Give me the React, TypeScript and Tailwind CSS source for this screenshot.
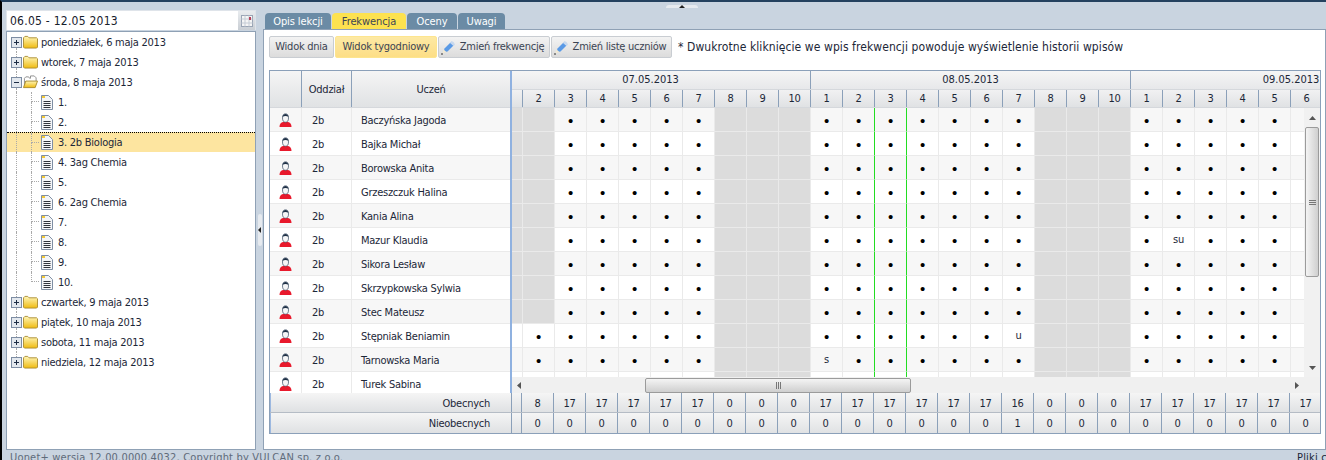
import type { ReactNode } from "react";

const students = [
  "Baczyńska Jagoda",
  "Bajka Michał",
  "Borowska Anita",
  "Grzeszczuk Halina",
  "Kania Alina",
  "Mazur Klaudia",
  "Sikora Lesław",
  "Skrzypkowska Sylwia",
  "Stec Mateusz",
  "Stępniak Beniamin",
  "Tarnowska Maria",
  "Turek Sabina",
];

const before = ["poniedziałek, 6 maja 2013", "wtorek, 7 maja 2013"];
const after = ["czwartek, 9 maja 2013", "piątek, 10 maja 2013", "sobota, 11 maja 2013", "niedziela, 12 maja 2013"];
const lessons = ["1.", "2.", "3. 2b Biologia", "4. 3ag Chemia", "5.", "6. 2ag Chemia", "7.", "8.", "9.", "10."];

// day index, lesson number
const columns: { day: number; n: number }[] = [];
for (let n = 1; n <= 10; n++) columns.push({ day: 0, n });
for (let n = 1; n <= 10; n++) columns.push({ day: 1, n });
for (let n = 1; n <= 6; n++) columns.push({ day: 2, n });

function cellValue(row: number, day: number, n: number) {
  if (day < 2 && n >= 8) return null;
  if (day === 0 && n <= 2 && row < 9) return null;
  if (day === 0 && n === 1) return "";
  if (row === 9 && day === 1 && n === 7) return "u";
  if (row === 10 && day === 1 && n === 1) return "s";
  if (row === 5 && day === 2 && n === 2) return "su";
  return "•";
}

function Plus({ open }: { open?: boolean }) {
  return (
    <svg width="11" height="11" viewBox="0 0 11 11" className="shrink-0">
      <rect x="0.5" y="0.5" width="10" height="10" fill="#e3e8ee" stroke="#7d8da3" />
      <path d={open ? "M3 5.5h5" : "M3 5.5h5M5.5 3v5"} stroke="#1d2c44" />
    </svg>
  );
}

function Folder({ open }: { open?: boolean }) {
  return (
    <svg width="15" height="14" viewBox="0 0 16 15" className="shrink-0">
      <defs>
        <linearGradient id="fold" x1="0" y1="0" x2="0" y2="1">
          <stop offset="0" stopColor="#fff6b8" />
          <stop offset="1" stopColor="#efbb12" />
        </linearGradient>
      </defs>
      {open ? (
        <>
          <path d="M1.5 13V3.5L3 2h3l1 1.5h1V1h4l2 2v4H1.5" fill="#fff" stroke="#8d8d8d" />
          <path d="M.5 13.5l2.5-7h12.5l-2.5 7z" fill="url(#fold)" stroke="#a98a2a" />
        </>
      ) : (
        <path d="M.5 13V3L2 1.5h3L6.5 3h8l1 1v9l-1 1h-13z" fill="url(#fold)" stroke="#ab8e35" />
      )}
    </svg>
  );
}

function Doc() {
  return (
    <svg width="12" height="15" viewBox="0 0 12 15" className="shrink-0">
      <path d="M.5.5h7l4 4v10h-11z" fill="#f4f6f9" stroke="#7f8ea3" />
      <rect x="1" y="1" width="3" height="2" fill="#f2c93a" />
      <path d="M2.5 6.5h7M2.5 8.5h7M2.5 10.5h7M2.5 12.5h7" stroke="#30343c" />
    </svg>
  );
}

function Pencil() {
  return (
    <svg width="15" height="15" viewBox="0 0 15 15" className="shrink-0">
      <path d="M3.5 8.5l6-6 3 3-6 6-4 1z" fill="#5a9ae6" />
      <path d="M9 3l3.500 3 1.500-1.500-1.500-2.500-2-1z" fill="#c7d8ee" />
      <path d="M2.500 9.500l3 2.500-4 1.500z" fill="#f3ead2" />
      <path d="M0 14h2" stroke="#333" />
    </svg>
  );
}

function Person() {
  return (
    <svg width="13" height="14" viewBox="0 0 13 14">
      <path d="M.5 14c0-3 1.500-4.500 3.500-5h5c2 .5 3.500 2 3.500 5z" fill="#e8192c" />
      <ellipse cx="6.500" cy="5" rx="3" ry="4.200" fill="#f6f6f7" stroke="#3a4c63" strokeWidth=".7" />
      <path d="M3.500 4C4 0 9 0 9.500 4C8 2.500 5 2.500 3.500 4z" fill="#1f3147" />
    </svg>
  );
}

const dotted = "border-dotted border-[#a9a9a9]";

function Day({ label, open, first, last }: { label: string; open?: boolean; first?: boolean; last?: boolean }) {
  return (
    <div className="flex h-5 items-center whitespace-pre">
      <div className="ml-[4px] mr-[1px] flex h-full w-[11px] shrink-0 flex-col items-center">
        <div className={`w-px flex-1 ${first ? "" : `border-l ${dotted}`}`} />
        <Plus open={open} />
        <div className={`w-px flex-1 ${last ? "" : `border-l ${dotted}`}`} />
      </div>
      <Folder open={open} />
      <span className="ml-[3px] pt-[2px]">{label}</span>
    </div>
  );
}

function Lesson({ label, selected, last }: { label: string; selected?: boolean; last?: boolean }) {
  return (
    <div
      className={`flex h-5 items-center whitespace-pre ${
        selected ? "border-t border-dotted border-black bg-[#fde5a0]" : ""
      }`}
    >
      <div className={`ml-[9px] h-full w-px shrink-0 border-l ${dotted}`} />
      <div className="ml-[14px] flex h-full w-[8px] shrink-0 flex-col">
        <div className={`h-1/2 border-b border-l ${dotted}`} />
        <div className={`h-1/2 ${last ? "" : `border-l ${dotted}`}`} />
      </div>
      <span className="ml-[2px] mr-[5px]">
        <Doc />
      </span>
      <span className="pt-[2px]">{label}</span>
    </div>
  );
}

function Btn({ children, active, className }: { children: ReactNode; active?: boolean; className: string }) {
  return (
    <div
      className={`flex h-[22px] items-center justify-center gap-[4px] whitespace-nowrap rounded-[2px] border text-[#3b4453] ${className} ${
        active
          ? "border-[#fde58f] bg-gradient-to-b from-[#fde9a4] to-[#fdde86]"
          : "border-[#c9cdd2] bg-gradient-to-b from-[#f3f3f3] to-[#dcdcdc]"
      }`}
    >
      {children}
    </div>
  );
}

function Tab({ children, active, className }: { children: ReactNode; active?: boolean; className: string }) {
  return (
    <div
      className={`flex h-4 items-center justify-center rounded-t-[4px] pt-[2px] tracking-[-0.1px] ${className} ${
        active ? "bg-[#fde24f] text-[#3d4655]" : "bg-[#6b8ba5] text-white"
      }`}
    >
      {children}
    </div>
  );
}

const headCell = "border-r border-[#8ba0b9] bg-gradient-to-b from-[#f5f5f5] to-[#e0e2e4]";

function Totals({ label, values, top }: { label: string; values: string[]; top?: boolean }) {
  const shift = top ? "pt-[4px]" : "pt-[2px]";
  return (
    <div className={`flex h-5 ${top ? "border-b border-[#b5bcc5]" : ""}`}>
      <div className={`flex w-[242px] shrink-0 items-center justify-end border-r border-l border-r-[#8ba0b9] border-l-[#9cb8e0] bg-gradient-to-b from-[#f5f5f5] to-[#dfe1e3] pr-[21px] ${shift}`}>
        {label}
      </div>
      <div className="flex flex-1 overflow-hidden">
        <div className="h-full w-[10px] shrink-0 border-r border-[#8ba0b9] bg-gradient-to-b from-[#f5f5f5] to-[#dfe1e3]" />
        {values.map((v, i) => (
          <div key={i} className={`flex h-full w-8 shrink-0 items-center justify-center ${headCell} ${shift}`}>
            {v}
          </div>
        ))}
      </div>
    </div>
  );
}

const obecni = ["8", "17", "17", "17", "17", "17", "0", "0", "0", "17", "17", "17", "17", "17", "17", "16", "0", "0", "0", "17", "17", "17", "17", "17", "17"];
const nieobecni = obecni.map((_, i) => (i === 15 ? "1" : "0"));

export default function App() {
  return (
    <div className="relative flex h-[460px] w-[1326px] flex-col overflow-hidden border-t-2 border-l-2 border-t-[#24415f] border-l-black bg-[#c9d4e0] font-['DejaVu_Sans',sans-serif] font-stretch-condensed text-[11px] tracking-[-0.25px] text-[#1c2738]">
      <div className="flex h-[448px] shrink-0">
        {/* left panel */}
        <div className="ml-[4px] mt-[8px] flex w-[250px] shrink-0 flex-col">
          <div className="flex h-[20px] items-center justify-between border border-b-0 border-[#dfe4ea] bg-white pl-[3px] text-[12px] tracking-[0.25px] text-[#17202c]">
            <span>06.05 - 12.05 2013</span>
            <div className="flex h-full w-[17px] items-center justify-center bg-gradient-to-b from-[#e9ecef] to-[#c9ced4]">
              <svg width="12" height="12" viewBox="0 0 12 12">
                <rect x=".5" y=".5" width="11" height="11" fill="#f5f5f5" stroke="#9aa5b5" />
                <path d="M.5 4h11M.5 8h11M4 .5v11M8 .5v11" stroke="#c5ccd5" />
                <rect x="8" y="2" width="2" height="3" fill="#b5405a" />
              </svg>
            </div>
          </div>
          <div className="mt-[1px] flex-1 border border-[#8fa1b5] bg-white">
            {before.map((d, i) => (
              <Day key={d} label={d} first={i === 0} />
            ))}
            <Day label="środa, 8 maja 2013" open />
            {lessons.map((l, i) => (
              <Lesson key={l} label={l} selected={i === 2} last={i === lessons.length - 1} />
            ))}
            {after.map((d, i) => (
              <Day key={d} label={d} last={i === after.length - 1} />
            ))}
          </div>
        </div>

        {/* splitter */}
        <div className="flex w-[7px] shrink-0 items-center justify-center">
          <div className="mt-[8px] flex h-[32px] w-[4px] items-center justify-center rounded-[2px] bg-[#e6eaef]">
            <svg width="3" height="6" viewBox="0 0 3 6">
              <path d="M3 0v6L0 3z" fill="#222" />
            </svg>
          </div>
        </div>

        {/* right panel */}
        <div className="flex min-w-0 flex-1 flex-col pt-[11px]">
          <div className="flex h-4 gap-[1px] pl-[2px]">
            <Tab className="w-[66px]">Opis lekcji</Tab>
            <Tab active className="w-[74px]">
              Frekwencja
            </Tab>
            <Tab className="w-[50px]">Oceny</Tab>
            <Tab className="w-[47px]">Uwagi</Tab>
          </div>
          <div className="flex-1 border border-[#8fa1b5] bg-white pl-[5px] pr-[4px]">
            <div className="mt-[6px] flex h-[22px] items-center gap-[1px]">
              <Btn className="w-[65px]">Widok dnia</Btn>
              <Btn active className="w-[102px]">
                Widok tygodniowy
              </Btn>
              <Btn className="w-[112px] pr-[3px]">
                <Pencil />
                Zmień frekwencję
              </Btn>
              <Btn className="w-[121px] pr-[3px]">
                <Pencil />
                Zmień listę uczniów
              </Btn>
              <span className="ml-[5px] text-[12px] tracking-[0.08px]">
                * Dwukrotne kliknięcie we wpis frekwencji powoduje wyświetlenie historii wpisów
              </span>
            </div>

            {/* grid */}
            <div className="mt-[12px] h-[364px] border border-[#8ba0b9]">
              <div className="flex h-[322px]">
                {/* fixed columns */}
                <div className="w-[242px] shrink-0 border-r-2 border-[#8fb1e0]">
                  <div className="flex h-[37px] border-b border-[#d5d8dc]">
                    <div className={`w-8 ${headCell}`} />
                    <div className={`flex w-[50px] items-center justify-center pt-[2px] ${headCell}`}>Oddział</div>
                    <div className="flex flex-1 items-center justify-center bg-gradient-to-b from-[#f5f5f5] to-[#e0e2e4] pt-[2px]">Uczeń</div>
                  </div>
                  <div className="h-[285px] overflow-hidden">
                    {students.map((s, r) => (
                      <div key={s} className={`flex h-6 border-b border-[#eaeaea] ${r % 2 ? "bg-white" : "bg-[#f7f7f7]"}`}>
                        <div className="flex w-8 items-center justify-center border-r border-[#eaeaea]">
                          <Person />
                        </div>
                        <div className="w-[50px] border-r border-[#eaeaea] pl-[10px] leading-[25px]">2b</div>
                        <div className="flex-1 pl-[9px] leading-[25px]">{s}</div>
                      </div>
                    ))}
                  </div>
                </div>

                {/* scrolled columns */}
                <div className="flex min-w-0 flex-1 flex-col">
                  <div className="h-[37px] shrink-0 overflow-hidden border-b border-[#d5d8dc]">
                    <div className="-ml-[21px] flex h-[18px] w-[1100px] bg-gradient-to-b from-[#f5f5f5] to-[#e7e8ea] tracking-normal">
                      <div className="w-[320px] shrink-0 border-r border-[#8ba0b9] text-center leading-[18px]">07.05.2013</div>
                      <div className="w-[320px] shrink-0 border-r border-[#8ba0b9] text-center leading-[18px]">08.05.2013</div>
                      <div className="w-[320px] shrink-0 text-center leading-[18px]">09.05.2013</div>
                    </div>
                    <div className="-ml-[21px] flex h-[18px] w-[1100px] border-t border-[#d5d8dc] bg-gradient-to-b from-[#f1f1f2] to-[#e0e2e4]">
                      {columns.map((c, i) => (
                        <div key={i} className="flex w-8 shrink-0 items-center justify-center border-r border-[#8ba0b9] pt-[2px]">
                          {c.n}
                        </div>
                      ))}
                    </div>
                  </div>
                  <div className="flex min-h-0 flex-1">
                    <div className="h-[269px] min-w-0 flex-1 overflow-hidden">
                      {students.map((s, r) => (
                        <div key={s} className={`-ml-[21px] flex h-6 w-[1100px] ${r % 2 ? "bg-white" : "bg-[#f7f7f7]"}`}>
                          {columns.map((c, i) => {
                            const v = cellValue(r, c.day, c.n);
                            const marked = c.day === 1 && (c.n === 2 || c.n === 3);
                            return (
                              <div
                                key={i}
                                className={`flex w-8 shrink-0 items-center justify-center border-r border-b border-b-[#eaeaea] pt-[2px] ${
                                  marked ? "border-r-[#22dd22]" : "border-r-[#eaeaea]"
                                } ${v === null ? "bg-[#dcdcdc]" : ""}`}
                              >
                                {v === "•" ? (
                                  <span className="font-['Liberation_Sans'] text-[15px] leading-none text-black">•</span>
                                ) : (
                                  v
                                )}
                              </div>
                            );
                          })}
                        </div>
                      ))}
                    </div>
                    <div className="flex h-[269px] w-[16px] shrink-0 flex-col items-center bg-[#f1f1f1]">
                      <svg width="7" height="4" viewBox="0 0 7 4" className="mt-[8px] shrink-0">
                        <path d="M0 4h7L3.500 0z" fill="#555" />
                      </svg>
                      <div className="mt-[7px] flex h-[150px] w-[14px] shrink-0 flex-col items-center justify-center gap-[1px] rounded-[2px] border border-[#9b9b9b] bg-gradient-to-r from-[#f4f4f4] to-[#cfcfcf]">
                        <div className="h-px w-[7px] bg-[#777]" />
                        <div className="h-px w-[7px] bg-[#777]" />
                        <div className="h-px w-[7px] bg-[#777]" />
                      </div>
                      <div className="flex-1" />
                      <svg width="7" height="4" viewBox="0 0 7 4" className="mb-[7px] shrink-0">
                        <path d="M0 0h7L3.500 4z" fill="#555" />
                      </svg>
                    </div>
                  </div>
                  <div className="flex h-4 shrink-0 items-center bg-[#f0f0f0] pr-[16px]">
                    <svg width="4" height="7" viewBox="0 0 4 7" className="ml-[5px]">
                      <path d="M4 0v7L0 3.500z" fill="#555" />
                    </svg>
                    <div className="ml-[124px] flex h-[15px] w-[266px] items-center justify-center gap-[1px] rounded-[2px] border border-[#9b9b9b] bg-gradient-to-b from-[#f4f4f4] to-[#cfcfcf]">
                      <div className="h-[7px] w-px bg-[#777]" />
                      <div className="h-[7px] w-px bg-[#777]" />
                      <div className="h-[7px] w-px bg-[#777]" />
                    </div>
                    <div className="flex-1" />
                    <svg width="4" height="7" viewBox="0 0 4 7" className="mr-[5px]">
                      <path d="M0 0v7l4-3.500z" fill="#555" />
                    </svg>
                  </div>
                </div>
              </div>
              <Totals label="Obecnych" values={obecni} top />
              <Totals label="Nieobecnych" values={nieobecni} />
            </div>
          </div>
        </div>
      </div>

      {/* footer */}
      <div className="flex justify-between pl-[8px] pt-[1px] leading-[14px] tracking-[0.18px] text-[#5f6b7a]">
        <span>Uonet+ wersja 12.00.0000.4032, Copyright by VULCAN sp. z o.o.</span>
        <span className="w-[29px] overflow-hidden whitespace-nowrap text-[#1c2738]">Pliki cookies</span>
      </div>

      {/* top collapse handle */}
      <div className="absolute left-[664px] top-[3px] flex h-[3px] w-[32px] items-center justify-center rounded-t-[3px] bg-[#e6eaef]">
        <svg width="6" height="3" viewBox="0 0 6 3">
          <path d="M0 3h6L3 0z" fill="#222" />
        </svg>
      </div>
    </div>
  );
}
